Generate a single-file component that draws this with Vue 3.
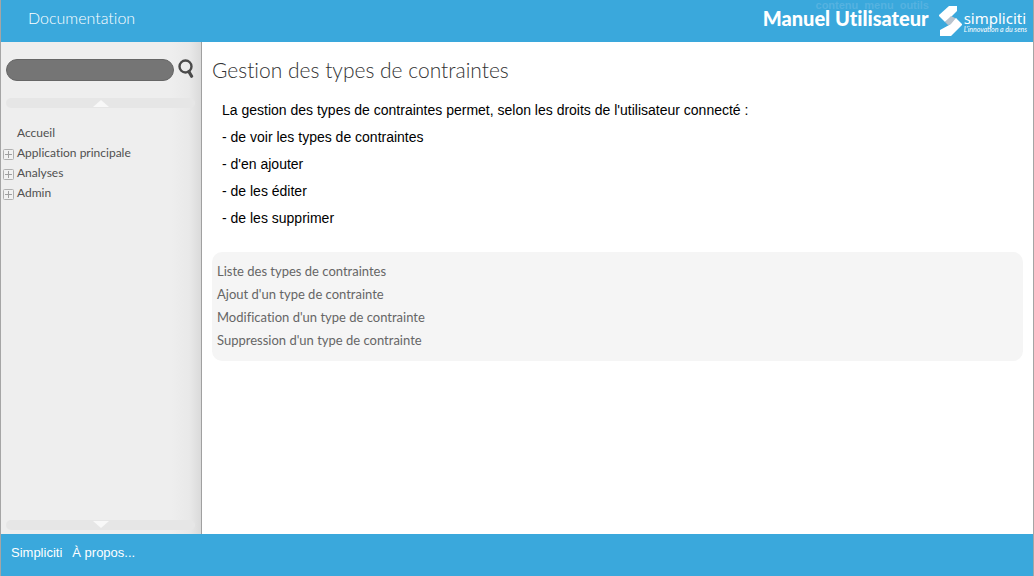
<script setup>
const skips = ['contenu', 'menu', 'outils']
const entries = [
  { label: 'Accueil', children: false },
  { label: 'Application principale', children: true },
  { label: 'Analyses', children: true },
  { label: 'Admin', children: true },
]
const rights = [
  "La gestion des types de contraintes permet, selon les droits de l'utilisateur connecté :",
  '- de voir les types de contraintes',
  "- d'en ajouter",
  '- de les éditer',
  '- de les supprimer',
]
const topics = [
  'Liste des types de contraintes',
  "Ajout d'un type de contrainte",
  "Modification d'un type de contrainte",
  "Suppression d'un type de contrainte",
]
</script>

<template>
  <div class="page">
    <header class="top">
      <span class="doc">Documentation</span>
      <nav class="skips" aria-label="Accès rapide">
        <a v-for="s in skips" :key="s" href="#main">{{ s }}</a>
      </nav>
      <span class="manual">Manuel Utilisateur</span>
      <a class="brand" href="#" aria-label="simpliciti">
        <svg class="mark" viewBox="0 0 23 30" aria-hidden="true">
          <path d="M10 0H18V5L12 11 6 16 0 10V9Z" fill="#fff" />
          <path d="M6 16 12 10 18 13 14 18 9 19Z" fill="#b9c3cd" />
          <path d="M17 12 23 18V19L12 30H1V24L12 18Z" fill="#fff" />
        </svg>
        <span class="brand-text">
          <span class="brand-name">simpliciti</span>
          <span class="brand-line">L'innovation a du sens</span>
        </span>
      </a>
    </header>

    <div class="body">
      <aside class="side">
        <form class="search" @submit.prevent>
          <input type="text" aria-label="Rechercher" />
          <button type="submit" aria-label="Lancer la recherche">
            <svg viewBox="0 0 16 20" aria-hidden="true">
              <circle cx="7.5" cy="8.5" r="6" fill="none" stroke="#4a4a4a" stroke-width="2.4" />
              <path d="M10.8 13.5 13.6 18.2" stroke="#4a4a4a" stroke-width="3.2" stroke-linecap="round" />
            </svg>
          </button>
        </form>
        <button class="scroll" type="button" aria-label="Défiler vers le haut">
          <svg viewBox="0 0 16 8" aria-hidden="true"><path d="M0 8 8 1 16 8Z" fill="#f8f8f8" /></svg>
        </button>
        <ul class="tree">
          <li v-for="e in entries" :key="e.label">
            <span class="slot">
              <button v-if="e.children" class="expand" type="button" :aria-label="'Ouvrir ' + e.label">
                <svg viewBox="0 0 11 11" aria-hidden="true">
                  <rect x=".5" y=".5" width="10" height="10" rx="1" fill="#f2f2f2" stroke="#b0b0b0" />
                  <path d="M2 5.5H9M5.5 2V9" stroke="#a0a0a0" />
                </svg>
              </button>
            </span>
            <a href="#">{{ e.label }}</a>
          </li>
        </ul>
        <button class="scroll" type="button" aria-label="Défiler vers le bas">
          <svg viewBox="0 0 16 8" aria-hidden="true"><path d="M0 0 8 7 16 0Z" fill="#f8f8f8" /></svg>
        </button>
      </aside>

      <main id="main" class="content">
        <h1>Gestion des types de contraintes</h1>
        <div class="intro">
          <p v-for="r in rights" :key="r">{{ r }}</p>
        </div>
        <ul class="topics">
          <li v-for="t in topics" :key="t"><a href="#">{{ t }}</a></li>
        </ul>
      </main>
    </div>

    <footer class="bottom">
      <a href="#">Simpliciti</a>
      <a href="#">À propos...</a>
    </footer>
  </div>
</template>

<style>
body {
  margin: 0;
}
</style>

<style scoped>
.page {
  box-sizing: border-box;
  min-height: 100vh;
  display: flex;
  flex-direction: column;
  border: 0 solid #a5a5a5;
  border-width: 0 1px;
  background: #fff;
  font-family: "Liberation Sans", Arial, sans-serif;
}
a {
  color: inherit;
  text-decoration: none;
}
button {
  display: flex;
  padding: 0;
  border: 0;
  background: none;
  cursor: pointer;
}
ul {
  margin: 0;
  padding: 0;
  list-style: none;
}
.top {
  position: relative;
  display: flex;
  align-items: flex-start;
  height: 42px;
  background: #3aa8dc;
  color: #fff;
}
.doc {
  margin-left: 27px;
  font: 300 16px/36px Lato, sans-serif;
  font-variant-ligatures: none;
}
.manual {
  margin-left: auto;
  font: 900 20px/36px Lato, sans-serif;
  font-variant-ligatures: none;
}
.skips {
  position: absolute;
  top: -2px;
  right: 104px;
  display: flex;
  gap: 6px;
  color: #55b2e0;
  font-size: 11px;
  font-weight: 700;
  line-height: 14px;
}
.brand {
  display: flex;
  gap: 2px;
  margin: 6px 6px 0 10px;
}
.mark {
  width: 23px;
  height: 30px;
}
.brand-text {
  display: flex;
  flex-direction: column;
  margin-top: 4px;
}
.brand-name {
  font: 15px/16px "Noto Sans", sans-serif;
}
.brand-line {
  font: italic 400 7px/7px Lato, sans-serif;
}
.body {
  flex: 1;
  display: flex;
}
.side {
  box-sizing: border-box;
  width: 201px;
  flex: none;
  display: flex;
  flex-direction: column;
  padding: 16px 6px 4px 5px;
  border-right: 1px solid #a0a0a0;
  background: linear-gradient(to right, #eee 170px, #e9e9e9 188px, #dadada 200px);
}
.search {
  display: flex;
  gap: 4px;
  margin-bottom: 17px;
}
.search input {
  box-sizing: border-box;
  flex: 1;
  min-width: 0;
  height: 22px;
  margin-top: 1px;
  padding: 0 10px;
  border: 1px solid #666;
  border-radius: 11px;
  background: #757575;
  color: #fff;
  font-size: 13px;
}
.search svg {
  width: 16px;
  height: 20px;
}
.search button {
  width: 17px;
}
.scroll {
  height: 10px;
  flex: none;
  align-items: center;
  justify-content: center;
  border-radius: 5px;
  background: #e6e6e6;
}
.scroll svg {
  width: 16px;
  height: 8px;
}
.tree {
  flex: 1;
  margin: 15px 0 0 -3px;
  color: #505050;
  font: 12px/20px Lato, sans-serif;
  font-variant-ligatures: none;
}
.tree li {
  display: flex;
  height: 20px;
}
.slot {
  width: 14px;
  padding-top: 6px;
}
.expand svg {
  width: 11px;
  height: 11px;
}
.content {
  flex: 1;
  padding: 14px 10px 0;
}
h1 {
  margin: 0;
  color: #333;
  font: 300 21px/28px Lato, sans-serif;
  font-variant-ligatures: none;
}
.intro {
  margin: 13px 10px 0;
  color: #000;
  font-size: 14px;
}
.intro p {
  margin: 0;
  line-height: 27px;
}
.topics {
  margin-top: 20px;
  padding: 8px 5px 9px;
  border-radius: 10px;
  background: #f5f5f5;
  color: #666;
  font: 13px/23px Lato, sans-serif;
  font-variant-ligatures: none;
}
.bottom {
  box-sizing: border-box;
  display: flex;
  gap: 10px;
  height: 42px;
  padding: 10px;
  background: #3aa8dc;
  color: #fff;
  font-size: 13px;
  line-height: 17px;
}
</style>
